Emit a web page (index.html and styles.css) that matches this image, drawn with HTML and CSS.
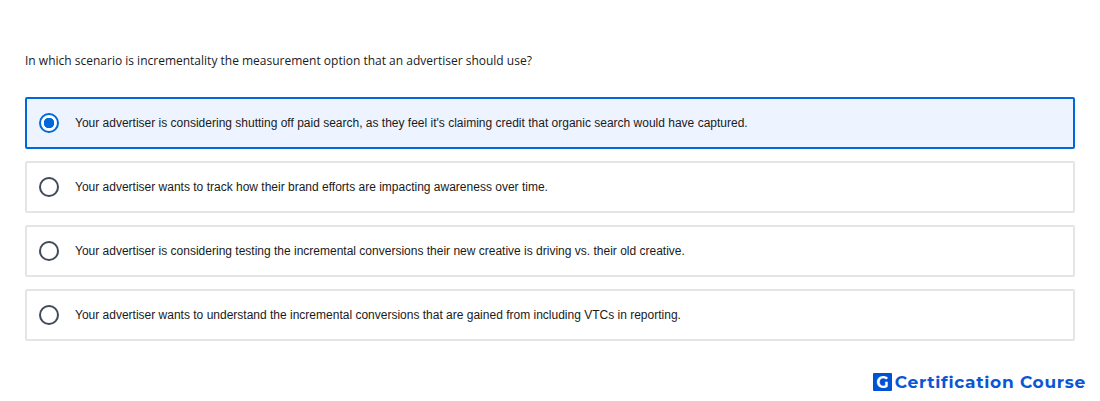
FILE: index.html
```
<!DOCTYPE html>
<html lang="en">
<head>
    <meta charset="UTF-8">
    <meta name="viewport" content="width=device-width, initial-scale=1.0">
    <title>Certification Course</title>
    <link rel="stylesheet" href="styles.css">
</head>
<body>
    <main class="quiz">
        <h1 class="question">In which scenario is incrementality the measurement option that an advertiser should use?</h1>
        <form class="options">
            <label class="option">
                <input type="radio" name="answer" value="1" checked>
                <span>Your advertiser is considering shutting off paid search, as they feel it's claiming credit that organic search would have captured.</span>
            </label>
            <label class="option">
                <input type="radio" name="answer" value="2">
                <span>Your advertiser wants to track how their brand efforts are impacting awareness over time.</span>
            </label>
            <label class="option">
                <input type="radio" name="answer" value="3">
                <span>Your advertiser is considering testing the incremental conversions their new creative is driving vs. their old creative.</span>
            </label>
            <label class="option">
                <input type="radio" name="answer" value="4">
                <span>Your advertiser wants to understand the incremental conversions that are gained from including VTCs in reporting.</span>
            </label>
        </form>
    </main>
    <footer class="brand">
        <span class="brand-mark">G</span>
        <span class="brand-name">Certification Course</span>
    </footer>
</body>
</html>
```
FILE: styles.css
```
* {
    margin: 0;
    padding: 0;
    box-sizing: border-box;
}

body {
    height: 401px;
    background-color: #fff;
    color: #1a1a1a;
    overflow: hidden;
}

.quiz {
    padding: 51px 25px 0;
}

.question {
    height: 46px;
    font: 400 12px/20px "Open Sans", sans-serif;
    white-space: nowrap;
}

.options {
    display: flex;
    flex-direction: column;
    gap: 12px;
}

.option {
    display: flex;
    align-items: center;
    gap: 16px;
    height: 52px;
    padding: 0 12px;
    border: 2px solid #e5e5e5;
    border-radius: 2px;
    font: 12px/18px "Liberation Sans", Arial, sans-serif;
    cursor: pointer;
}

.option:has(input:checked) {
    border-color: #0069d9;
    background-color: #eef4ff;
}

.option input {
    appearance: none;
    width: 20px;
    height: 20px;
    border: 2px solid #414b5a;
    border-radius: 50%;
    background-color: #fff;
}

.option input:checked {
    border-color: #0069d9;
    background-image: radial-gradient(circle, #0069d9 5px, transparent 5.5px);
}

.brand {
    display: flex;
    align-items: center;
    justify-content: flex-end;
    gap: 3px;
    padding: 31px 14px 0 0;
    color: #0a56d6;
    font: 700 17px/20px "Montserrat", "Open Sans", sans-serif;
}

.brand-mark {
    width: 19px;
    height: 18px;
    border-radius: 1px;
    background-color: #0052d4;
    color: #fff;
    font-size: 16px;
    line-height: 19px;
    text-align: center;
}

.brand-name {
    letter-spacing: 0.7px;
}
```
